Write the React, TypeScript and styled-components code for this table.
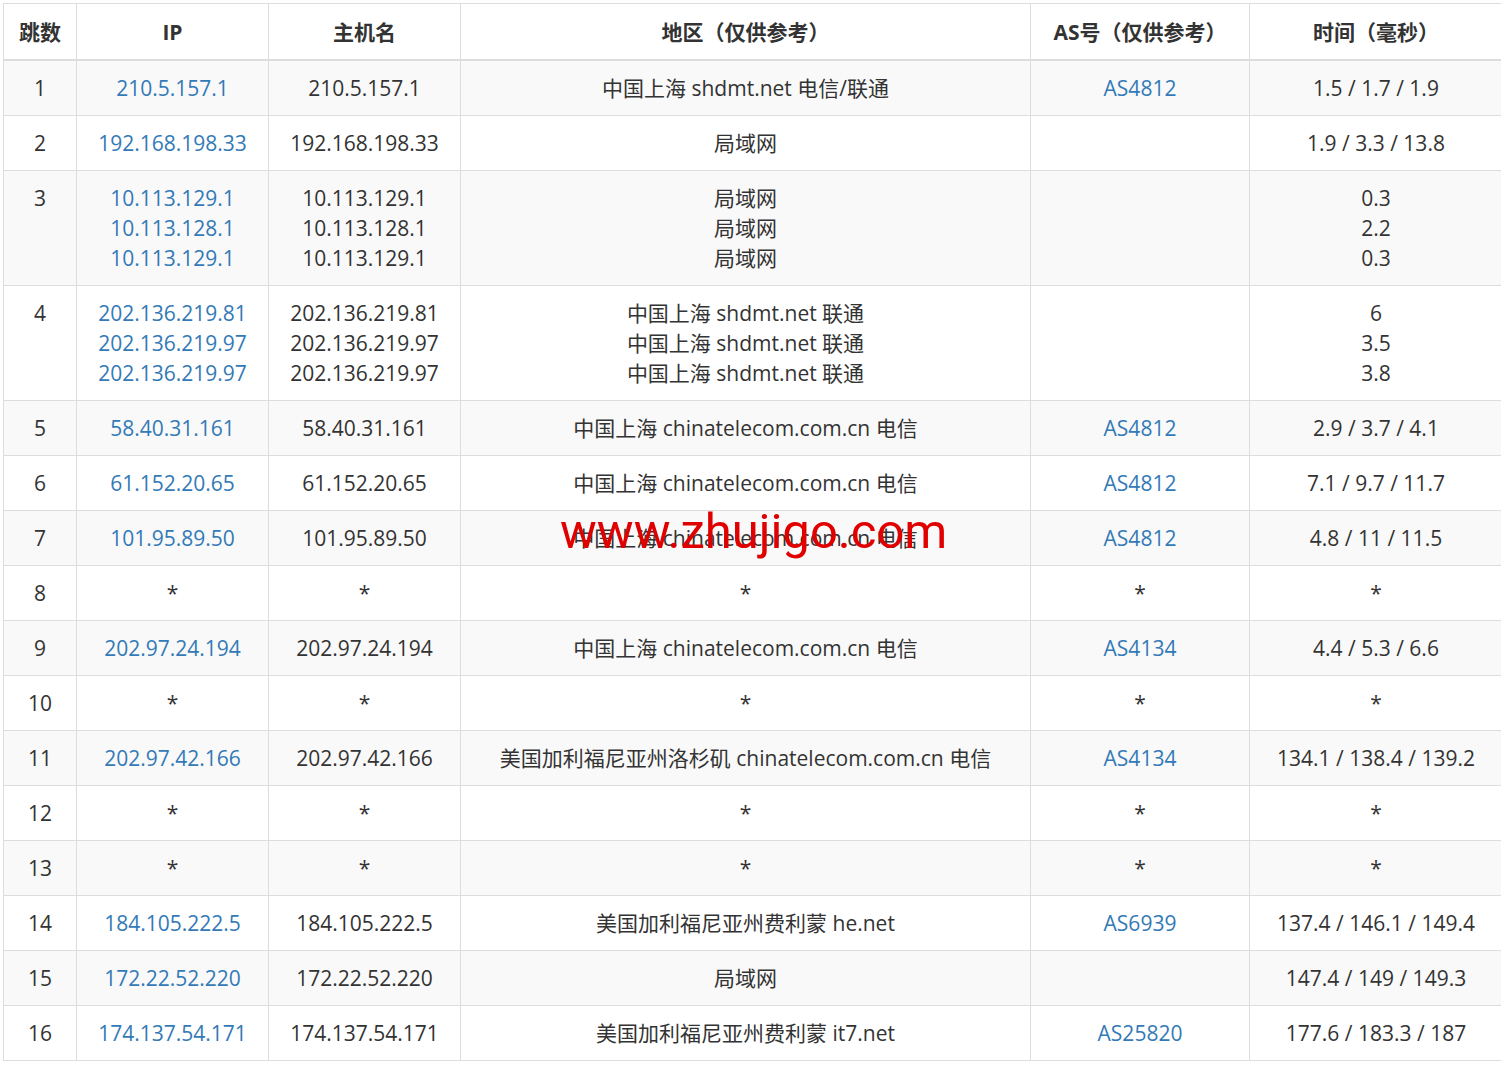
import React from "react";
import styled, { createGlobalStyle } from "styled-components";

const Global = createGlobalStyle`
  html, body { margin: 0; padding: 0; background: #fff; overflow: hidden; }
  body { font-family: "Open Sans", "Noto Sans CJK SC", sans-serif; color: #333; }
`;

const Page = styled.div`
  position: relative;
  padding: 3px 0 0 3px;
  width: 1501px;
  height: 1070px;
  box-sizing: border-box;
`;

const Table = styled.table`
  width: 1499px;
  table-layout: fixed;
  border-collapse: collapse;
  border-spacing: 0;
  font-size: 21px;
  line-height: 30px;
`;

const Th = styled.th`
  padding: 13px 8px 12px;
  border: 1px solid #ddd;
  border-bottom: 2px solid #ddd;
  font-weight: 700;
  text-align: center;
  vertical-align: bottom;
  color: #333;
  white-space: nowrap;
`;

const Tr = styled.tr<{ $striped: boolean }>`
  background: ${(p) => (p.$striped ? "#f9f9f9" : "#fff")};
`;

const Td = styled.td`
  padding: 12px 8px;
  border: 1px solid #ddd;
  text-align: center;
  vertical-align: top;
  white-space: nowrap;
  color: #333;
`;

const Link = styled.a`
  color: #337ab7;
  text-decoration: none;
  display: block;
`;

const Line = styled.div``;

const Watermark = styled.div`
  position: absolute;
  left: 560px;
  top: 507px;
  font-family: Roboto, sans-serif;
  font-size: 49px;
  line-height: 49px;
  color: #e00000;
  pointer-events: none;
  white-space: nowrap;
`;

type Row = {
  hop: string;
  ips: string[];
  loc: string[];
  as: string;
  time: string[];
};

const rows: Row[] = [
  { hop: "1", ips: ["210.5.157.1"], loc: ["中国上海 shdmt.net 电信/联通"], as: "AS4812", time: ["1.5 / 1.7 / 1.9"] },
  { hop: "2", ips: ["192.168.198.33"], loc: ["局域网"], as: "", time: ["1.9 / 3.3 / 13.8"] },
  {
    hop: "3",
    ips: ["10.113.129.1", "10.113.128.1", "10.113.129.1"],
    loc: ["局域网", "局域网", "局域网"],
    as: "",
    time: ["0.3", "2.2", "0.3"],
  },
  {
    hop: "4",
    ips: ["202.136.219.81", "202.136.219.97", "202.136.219.97"],
    loc: ["中国上海 shdmt.net 联通", "中国上海 shdmt.net 联通", "中国上海 shdmt.net 联通"],
    as: "",
    time: ["6", "3.5", "3.8"],
  },
  { hop: "5", ips: ["58.40.31.161"], loc: ["中国上海 chinatelecom.com.cn 电信"], as: "AS4812", time: ["2.9 / 3.7 / 4.1"] },
  { hop: "6", ips: ["61.152.20.65"], loc: ["中国上海 chinatelecom.com.cn 电信"], as: "AS4812", time: ["7.1 / 9.7 / 11.7"] },
  { hop: "7", ips: ["101.95.89.50"], loc: ["中国上海 chinatelecom.com.cn 电信"], as: "AS4812", time: ["4.8 / 11 / 11.5"] },
  { hop: "8", ips: ["*"], loc: ["*"], as: "*", time: ["*"] },
  { hop: "9", ips: ["202.97.24.194"], loc: ["中国上海 chinatelecom.com.cn 电信"], as: "AS4134", time: ["4.4 / 5.3 / 6.6"] },
  { hop: "10", ips: ["*"], loc: ["*"], as: "*", time: ["*"] },
  { hop: "11", ips: ["202.97.42.166"], loc: ["美国加利福尼亚州洛杉矶 chinatelecom.com.cn 电信"], as: "AS4134", time: ["134.1 / 138.4 / 139.2"] },
  { hop: "12", ips: ["*"], loc: ["*"], as: "*", time: ["*"] },
  { hop: "13", ips: ["*"], loc: ["*"], as: "*", time: ["*"] },
  { hop: "14", ips: ["184.105.222.5"], loc: ["美国加利福尼亚州费利蒙 he.net"], as: "AS6939", time: ["137.4 / 146.1 / 149.4"] },
  { hop: "15", ips: ["172.22.52.220"], loc: ["局域网"], as: "", time: ["147.4 / 149 / 149.3"] },
  { hop: "16", ips: ["174.137.54.171"], loc: ["美国加利福尼亚州费利蒙 it7.net"], as: "AS25820", time: ["177.6 / 183.3 / 187"] },
];

const widths = [73, 192, 192, 570, 219, 253];

export default function App() {
  return (
    <Page>
      <Global />
      <Table>
        <colgroup>
          {widths.map((w, i) => (
            <col key={i} style={{ width: w }} />
          ))}
        </colgroup>
        <thead>
          <tr>
            <Th>跳数</Th>
            <Th>IP</Th>
            <Th>主机名</Th>
            <Th>地区（仅供参考）</Th>
            <Th>AS号（仅供参考）</Th>
            <Th>时间（毫秒）</Th>
          </tr>
        </thead>
        <tbody>
          {rows.map((r, i) => (
            <Tr key={r.hop} $striped={i % 2 === 0}>
              <Td>{r.hop}</Td>
              <Td>
                {r.ips.map((ip, j) =>
                  ip === "*" ? <Line key={j}>*</Line> : <Link key={j} href="#">{ip}</Link>
                )}
              </Td>
              <Td>
                {r.ips.map((ip, j) => (
                  <Line key={j}>{ip}</Line>
                ))}
              </Td>
              <Td>
                {r.loc.map((l, j) => (
                  <Line key={j}>{l}</Line>
                ))}
              </Td>
              <Td>{r.as === "*" ? "*" : r.as ? <Link href="#">{r.as}</Link> : null}</Td>
              <Td>
                {r.time.map((t, j) => (
                  <Line key={j}>{t}</Line>
                ))}
              </Td>
            </Tr>
          ))}
        </tbody>
      </Table>
      <Watermark>www.zhujigo.com</Watermark>
    </Page>
  );
}
